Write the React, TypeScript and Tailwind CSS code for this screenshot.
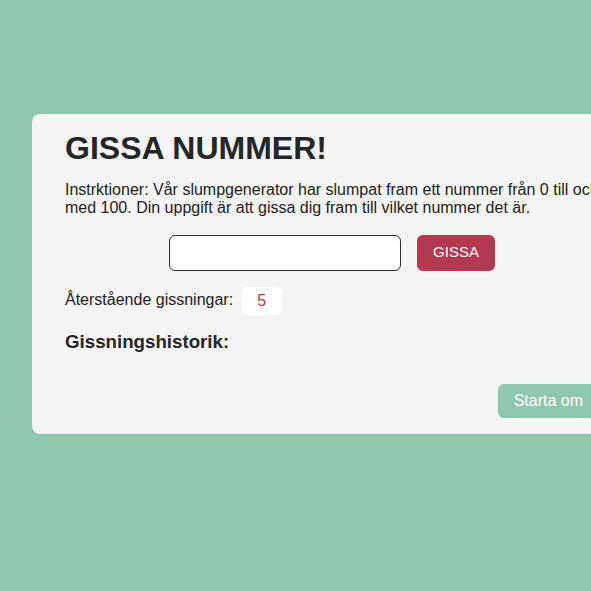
import React, { useState } from 'react';

const App: React.FC = () => {
    const [guess, setGuess] = useState('');
    const [remaining] = useState(5);

    return (
        <div
            className="min-h-[591px] w-full overflow-hidden bg-[#92c7af] pt-[114px] pl-[32px]"
            style={{ fontFamily: '"Liberation Sans", Arial, Helvetica, sans-serif' }}
        >
            <div className="w-[600px] rounded-[8px] bg-[#f4f4f4] px-[33px] pt-[16px] pb-[16px] text-[#222222]">
                <h1 className="text-[32px] font-bold leading-[1.15] text-[#262626]">GISSA NUMMER!</h1>
                <p className="mt-[14px] text-[16px] leading-[1.15]">
                    Instrktioner: Vår slumpgenerator har slumpat fram ett nummer från 0 till och med 100. Din uppgift är att gissa dig fram till vilket nummer det är.
                </p>

                <div className="mt-[17px] flex justify-center gap-4">
                    <input
                        type="text"
                        value={guess}
                        onChange={(e) => setGuess(e.target.value)}
                        className="h-[36px] w-[232px] rounded-[6px] border border-[#2e2e2e] bg-white px-2 text-[16px] outline-none"
                    />
                    <button className="h-[36px] rounded-[6px] bg-[#b4384f] px-4 text-[15px] text-white">
                        GISSA
                    </button>
                </div>

                <div className="mt-[16px] flex items-center gap-[8px]">
                    <span className="text-[16px] leading-[1.15]">Återstående gissningar:</span>
                    <span className="flex h-[28px] w-[41px] items-center justify-center rounded-[6px] bg-white text-[16px] text-[#b4384f]">
                        {remaining}
                    </span>
                </div>

                <h3 className="mt-[16px] text-[18.72px] font-bold leading-[1.15] text-[#262626]">Gissningshistorik:</h3>

                <div className="mt-[32px] flex justify-end">
                    <button className="h-[34px] rounded-[6px] bg-[#92c7af] px-4 text-[16px] text-white">
                        Starta om
                    </button>
                </div>
            </div>
        </div>
    );
};

export default App;
